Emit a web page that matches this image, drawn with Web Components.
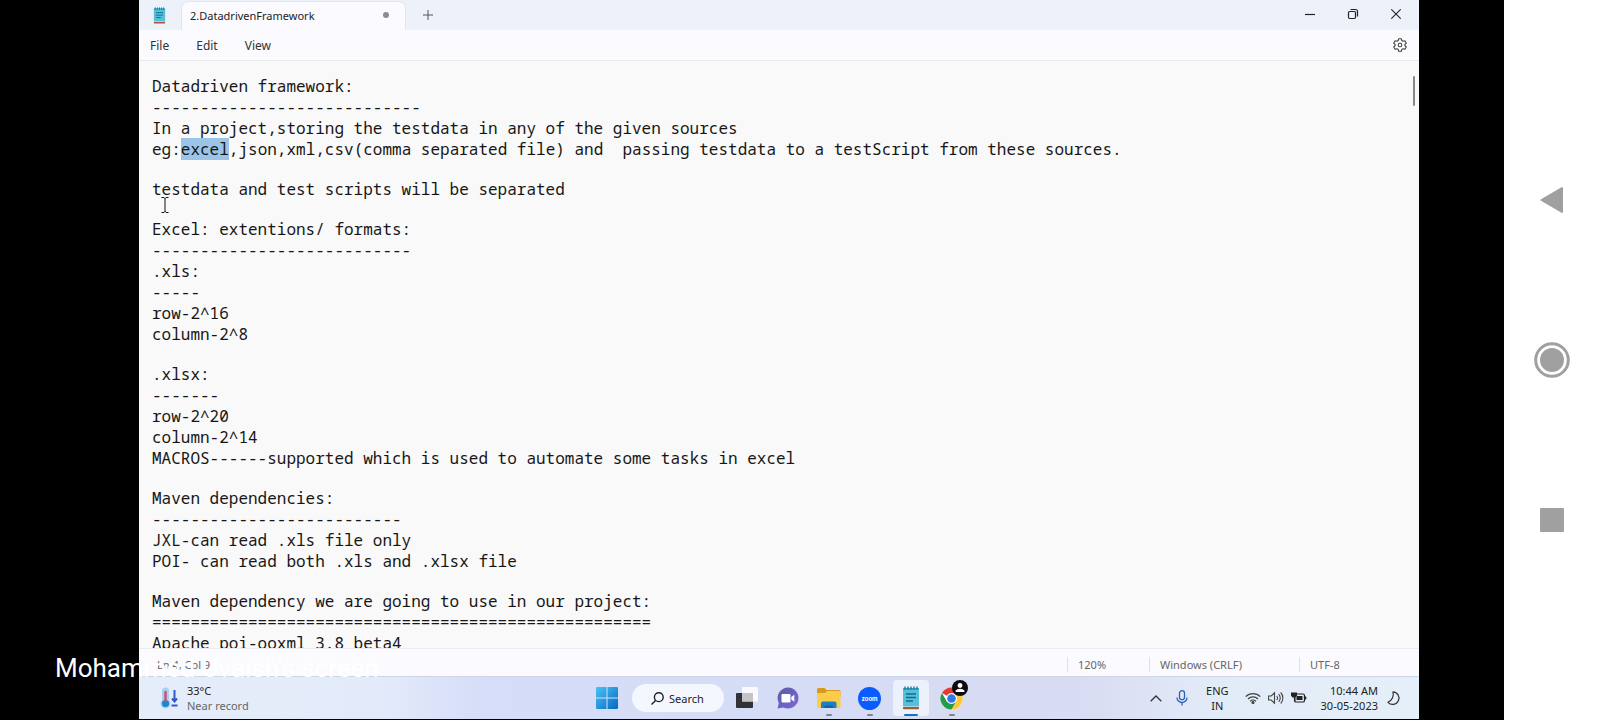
<!DOCTYPE html>
<html lang="en">
<head>
<meta charset="utf-8">
<title>2.DatadrivenFramework - Notepad</title>
<style>
html,body{margin:0;height:100%;background:#000;overflow:hidden}
body{font:12px/15px "Noto Sans","Open Sans",sans-serif;color:#222}
</style>
</head>
<body>
<screen-share presenter="Mohammed Uvaish's screen">
  <notepad-window>
    <title-bar slot="title" name="2.DatadrivenFramework"></title-bar>
    <menu-bar slot="menu"></menu-bar>
    <text-editor slot="body"></text-editor>
    <status-bar slot="status"></status-bar>
  </notepad-window>
  <task-bar slot="taskbar"></task-bar>
  <system-nav slot="nav"></system-nav>
</screen-share>
<script>
const base = `:host,*{box-sizing:border-box}button{border:0;background:none;padding:0;margin:0;font:inherit;color:inherit;display:grid;place-items:center}svg{display:block;overflow:visible}`;
const notepadIcon = (w,h) => `<svg width="${w}" height="${h}" viewBox="0 0 18 24" aria-hidden="true">
  <rect x="1" y="20" width="16" height="3.6" rx=".8" fill="#f1ece8"/><rect x="1" y="21" width="16" height="2.2" rx=".6" fill="#a85a35"/>
  <rect x="1" y="2" width="16" height="18.6" rx="1" fill="#56bfdc"/><path d="M1 3a1 1 0 0 1 1-1h14a1 1 0 0 1 1 1v1H1z" fill="#3aa4c8"/>
  <path d="M3 .6v3M6 .6v3M9 .6v3M12 .6v3M15 .6v3" stroke="#19708f" stroke-width="1.3"/>
  <path d="M4 8h10M4 11.5h10M4 15h7" stroke="#126d8d" stroke-width="1.3"/></svg>`;
const define = (name, css, html) => customElements.define(name, class extends HTMLElement {
  constructor(){
    super();
    const t = document.createElement('template');
    t.innerHTML = `<style>${base}${css}</style>${typeof html === 'function' ? html(this) : html}`;
    this.attachShadow({mode:'open'}).append(t.content.cloneNode(true));
  }
});

define('screen-share', `
:host{display:flex;height:100vh;background:#000;position:relative}
.stage{flex:1;min-width:0;display:flex;flex-direction:column;padding:0 85px 1px 139px}
.caption{position:absolute;left:55px;bottom:36px;font:26px/32px Roboto,sans-serif;color:#fff;white-space:nowrap}
`, el => `<main class="stage"><slot></slot><slot name="taskbar"></slot></main><slot name="nav"></slot><div class="caption">${el.getAttribute('presenter')}</div>`);

define('notepad-window', `
:host{display:flex;flex-direction:column;flex:1;min-height:0;background:#f9f9f9}
`, `<slot name="title"></slot><slot name="menu"></slot><slot name="body"></slot><slot name="status"></slot>`);

define('title-bar', `
:host{display:flex;height:30px;flex:none;background:#edf2fa;align-items:stretch}
.app{width:42px;padding:7px 0 0 14px}
.tab{width:225px;margin-top:1px;background:#fbfaff;border:1px solid #e3e6ee;border-bottom:0;border-radius:7px 7px 0 0;display:flex;align-items:center;justify-content:space-between;padding:0 16px 2px 8px;font-size:11px}
.dot{width:6px;height:6px;border-radius:50%;background:#8b8c90}
.add{width:44px}
.controls{margin-left:auto;display:flex;padding-right:2px}
.controls button{width:43px;height:27px}
`, el => `<div class="app">${notepadIcon(13,17)}</div>
<div class="tab" role="tab"><span>${el.getAttribute('name')}</span><span class="dot"></span></div>
<button class="add" aria-label="New tab"><svg width="10" height="10" viewBox="0 0 10 10"><path d="M5 0v10M0 5h10" stroke="#555"/></svg></button>
<div class="controls">
<button aria-label="Minimize"><svg width="10" height="10" viewBox="0 0 10 10"><path d="M0 5.5h10" stroke="#222" stroke-width="1.2"/></svg></button>
<button aria-label="Restore"><svg width="10" height="10" viewBox="0 0 10 10" fill="none" stroke="#222" stroke-width="1.2"><rect x=".5" y="2.5" width="7" height="7" rx="1.2"/><path d="M2.5.5h5a2 2 0 0 1 2 2v5"/></svg></button>
<button aria-label="Close"><svg width="10" height="10" viewBox="0 0 10 10"><path d="M.3.3l9.4 9.4M9.7.3L.3 9.7" stroke="#222" stroke-width="1.1"/></svg></button>
</div>`);

define('menu-bar', `
:host{display:flex;height:31px;flex:none;background:#fbfaff;border-bottom:1px solid #e9e9ee;align-items:center;padding:0 12px 0 11px;gap:27px;color:#333}
.gear{margin-left:auto}
`, `<button>File</button><button>Edit</button><button>View</button>
<button class="gear" aria-label="Settings"><svg width="14" height="14" viewBox="0 0 14 14" fill="none" stroke="#444" stroke-width="1.1" stroke-linejoin="round"><path d="M5.7.7h2.6l.5 1.8 1.3.7 1.8-.5 1.4 2.3-1.4 1.3v1.4l1.4 1.3-1.4 2.3-1.8-.5-1.3.7-.5 1.8H5.7l-.5-1.8-1.3-.7-1.8.5L.7 9l1.4-1.3V6.300L.7 5l1.400-2.300 1.800.5 1.300-.7z"/><circle cx="7" cy="7" r="1.800"/></svg></button>`);

const paragraphs = [
  ['Datadriven framework:','-'.repeat(28),'In a project,storing the testdata in any of the given sources','eg:<mark>excel</mark>,json,xml,csv(comma separated file) and  passing testdata to a testScript from these sources.'],
  ['testdata and test scripts will be separated'],
  ['Excel: extentions/ formats:','-'.repeat(27),'.xls:','-----','row-2^16','column-2^8'],
  ['.xlsx:','-------','row-2^20','column-2^14','MACROS------supported which is used to automate some tasks in excel'],
  ['Maven dependencies:','-'.repeat(26),'JXL-can read .xls file only','POI- can read both .xls and .xlsx file'],
  ['Maven dependency we are going to use in our project:','='.repeat(52),'Apache poi-ooxml 3.8 beta4']
];
define('text-editor', `
:host{display:block;flex:1;min-height:0;overflow:hidden;position:relative;background:#f9f9f9}
.doc{padding:15px 13px;display:flex;flex-direction:column;gap:19px;outline:0;font:16px/21px "Noto Sans Mono","Liberation Mono",monospace;color:#161616}
p{margin:0;white-space:pre}
mark{background:#9bc4e8;color:inherit}
.thumb{position:absolute;right:4px;top:15px;width:2px;height:30px;border-radius:1px;background:#888}
.cursor{position:absolute;left:22px;top:136px}
`, `<div class="doc" role="textbox" aria-multiline="true" aria-label="Document text" contenteditable="true" spellcheck="false">${paragraphs.map(p=>`<p>${p.join('\n')}</p>`).join('')}</div>
<div class="thumb"></div>
<svg class="cursor" width="8" height="16" viewBox="0 0 8 16" fill="none" stroke="#111"><path d="M.5.5H3L4 1.500 5 .5H7.500M4 1v14M.5 15.500H3L4 14.500 5 15.500H7.500"/></svg>`);

define('status-bar', `
:host{display:flex;height:28px;flex:none;background:#fbfaff;border-top:1px solid #ececf0;align-items:center;padding-top:3px;font-size:11px;color:#666}
span{border-left:1px solid #e0e0e6;padding-left:10px}
.pos{flex:1;border:0;padding-left:18px}
.zoom{width:82px}.eol{width:150px}.enc{width:120px}
`, `<span class="pos">Ln 4, Col 9</span><span class="zoom">120%</span><span class="eol">Windows (CRLF)</span><span class="enc">UTF-8</span>`);

define('task-bar', `
:host{display:grid;grid-template-columns:1fr auto 1fr;height:43px;flex:none;border-top:1px solid #cfd5e6;background:linear-gradient(90deg,#e5edf9 0,#e3eafa 19%,#d5ddf8 27%,#d6dcf5 55%,#d9dcf2 74%,#e2ebf8 84%,#e5eff9 100%);align-items:center;font-size:11px}
.weather{display:flex;align-items:center;gap:9px;padding-left:21px;text-align:left;justify-self:start}
small{font-size:11px;color:#666;display:block}
.apps{display:flex;gap:5px;align-items:center}
.apps button{width:36px;height:36px;position:relative;border-radius:4px}
.apps .search{width:92px;height:28px;margin-left:2px;border-radius:14px;background:#f4f7fe;display:flex;align-items:center;justify-content:center;gap:5px;font-size:11px}
.open::after{content:"";position:absolute;bottom:0;left:15px;width:6px;height:2px;border-radius:1px;background:#80838f}
.apps .active{background:#edf1fb}
.active::after{left:11px;width:14px;background:#1372bd}
.badge{position:absolute;right:2px;top:0}
.tray{display:flex;justify-self:end;align-items:center;padding-right:19px}
.mic{margin-left:14px}
.tray .mic{margin-left:14px}
.lang{margin:0 16px 0 18px;text-align:center}
.status{display:flex;gap:7px;align-items:center}
.clock{text-align:right;margin:0 9px 0 14px;white-space:nowrap}
`, `<button class="weather"><svg width="18" height="22" viewBox="0 0 18 22"><path d="M2 4a3.500 3.500 0 0 1 7 0v9a5 5 0 1 1-7 0z" fill="#a7d1f4"/><circle cx="5.500" cy="16.500" r="3.600" fill="#1d86d2"/><path d="M5.500 5v9" stroke="#cf4f66" stroke-width="2.400" stroke-linecap="round"/><path d="M14.500 3v11M12 11.500l2.500 3 2.500-3M11.500 18.500h6" stroke="#315bc4" stroke-width="2" fill="none"/></svg><span>33°C<small>Near record</small></span></button>
<nav class="apps">
<button aria-label="Start"><svg width="22" height="22" viewBox="0 0 22 22"><defs><linearGradient id="w" x2="1" y2="1"><stop stop-color="#48c4f7"/><stop offset="1" stop-color="#0668bd"/></linearGradient></defs><path d="M1 0h9.500v10.500H0V1a1 1 0 0 1 1-1zM11.500 0H21a1 1 0 0 1 1 1v9.500H11.500zM0 11.500h10.500V22H1a1 1 0 0 1-1-1zM11.500 11.500H22V21a1 1 0 0 1-1 1h-9.500z" fill="url(#w)"/></svg></button>
<button class="search"><svg width="13" height="13" viewBox="0 0 13 13" fill="none" stroke="#222" stroke-width="1.400"><circle cx="7.800" cy="5.200" r="4.400"/><path d="M4.600 8.400L.5 12.500"/></svg>Search</button>
<button aria-label="Task view"><svg width="22" height="22" viewBox="0 0 22 22"><rect x="0" y="6" width="17" height="15" rx="1" fill="#303236"/><rect x="6" y="0" width="16" height="14.500" rx="1" fill="#fff" opacity=".85"/><rect x="6" y="6" width="11" height="8.500" fill="#c3c4c8"/></svg></button>
<button aria-label="Chat"><svg width="22" height="22" viewBox="0 0 22 22"><defs><linearGradient id="c" x2="1" y2="1"><stop stop-color="#5b5aa8"/><stop offset="1" stop-color="#7e68d8"/></linearGradient></defs><path d="M11 .5A10.500 10.500 0 1 1 6.300 20.400L.6 21.500 1.800 16A10.500 10.500 0 0 1 11 .5z" fill="url(#c)"/><rect x="4.500" y="7" width="9" height="8.500" rx="1.300" fill="#fff"/><path d="M14.300 10l3-2.300v7l-3-2.300z" fill="#fff"/></svg></button>
<button class="open" aria-label="File Explorer"><svg width="24" height="22" viewBox="0 0 24 22"><path d="M0 2.500a1.500 1.500 0 0 1 1.500-1.500h6l2 2H22a1.500 1.500 0 0 1 1.500 1.500V10H0z" fill="#d79a1e"/><path d="M0 6h8l2-2h12a1.500 1.500 0 0 1 1.500 1.500v14A1.500 1.500 0 0 1 22 21H1.500A1.500 1.500 0 0 1 0 19.500z" fill="#fbcc47"/><path d="M4 21v-4.500a2 2 0 0 1 2-2h11.500a2 2 0 0 1 2 2V21z" fill="#1c7fc4"/><path d="M7.500 21v-1.500a1 1 0 0 1 1-1H15a1 1 0 0 1 1 1V21z" fill="#0f62a5"/></svg></button>
<button class="open" aria-label="Zoom"><svg width="23" height="23" viewBox="0 0 23 23"><circle cx="11.500" cy="11.500" r="11.500" fill="#0b5cff"/><text x="11.500" y="13.500" text-anchor="middle" font-family="Inter,sans-serif" font-size="6" font-weight="700" fill="#fff">zoom</text></svg></button>
<button class="open active" aria-label="Notepad">${notepadIcon(18,24)}</button>
<button class="open" aria-label="Chrome"><svg width="23" height="23" viewBox="0 0 24 24"><circle cx="12" cy="12" r="11.500" fill="#fff"/><path d="M12 12L2.040 6.250A11.500 11.500 0 0 1 21.960 6.250L12 6.300z" fill="#df3d34"/><path d="M21.960 6.250A11.500 11.500 0 0 1 12 23.500L17 15 12 6.250z" fill="#fcc934"/><path d="M2.040 6.250A11.500 11.500 0 0 0 12 23.500L16.900 14.900 7 14.900z" fill="#249a4b"/><circle cx="12" cy="12" r="5.700" fill="#fff"/><circle cx="12" cy="12" r="4.500" fill="#2f78e6"/></svg><svg class="badge" width="16" height="16" viewBox="0 0 16 16"><circle cx="8" cy="8" r="8" fill="#0b0b0b"/><circle cx="8" cy="5.500" r="2.400" fill="#fff"/><path d="M3.600 12V10.500Q5 8.800 8 8.800t4.400 1.700V12z" fill="#fff"/></svg></button>
</nav>
<div class="tray">
<button aria-label="Show hidden icons"><svg width="12" height="7" viewBox="0 0 12 7"><path d="M.7 6.300L6 1l5.300 5.300" fill="none" stroke="#333" stroke-width="1.300"/></svg></button>
<button class="mic" aria-label="Microphone"><svg width="12" height="16" viewBox="0 0 12 16" fill="none" stroke="#2d62b8" stroke-width="1.300"><rect x="3.500" y=".7" width="5" height="9" rx="2.500"/><path d="M1 7.500a5 5 0 0 0 10 0M6 12.500V15.500"/></svg></button>
<button class="lang"><span>ENG<br>IN</span></button>
<button class="status" aria-label="Network, volume, battery">
<svg width="16" height="12" viewBox="0 0 16 12" fill="none" stroke="#444" stroke-width="1.200"><path d="M.7 4.600a10.300 10.300 0 0 1 14.600 0M3 7a7 7 0 0 1 10 0M5.200 9.200a4 4 0 0 1 5.600 0"/><circle cx="8" cy="10.500" r="1" fill="#333"/></svg>
<svg width="16" height="12" viewBox="0 0 16 12" fill="none" stroke="#444" stroke-width="1.100"><path d="M.6 4h2.600L6.500.8v10.400L3.200 8H.6zM8.700 4a3 3 0 0 1 0 4M10.700 2.200a5.500 5.500 0 0 1 0 7.600M12.700.5a8 8 0 0 1 0 11"/></svg>
<svg width="16" height="12" viewBox="0 0 16 12"><rect x="3.500" y="2" width="10" height="8" rx="1.600" fill="none" stroke="#222" stroke-width="1.200"/><rect x="5.500" y="4" width="6" height="4" fill="#222"/><path d="M14.500 4.500v3" stroke="#222" stroke-width="1.500"/><path d="M0 .5h6v3.200L4.500 5.500V9h-1.500V5.500H1.500L0 3.700z" fill="#222"/></svg></button>
<button class="clock"><span>10:44 AM<br>30-05-2023</span></button>
<button aria-label="Focus assist"><svg width="13" height="14" viewBox="0 0 13 14"><path d="M6 .8A6.300 6.300 0 1 1 1 11.300 9 9 0 0 0 6 .8z" fill="none" stroke="#333" stroke-width="1.200" stroke-linejoin="round"/></svg></button>
</div>`);

define('system-nav', `
:host{display:flex;flex:none;width:96px;background:#fff;flex-direction:column;align-items:center;justify-content:center;gap:124px}
button{width:36px;height:36px}
`, `<button aria-label="Back"><svg width="24" height="28" viewBox="0 0 24 28"><path d="M1.500 14L22 2v24z" fill="#a0a0a0" stroke="#a0a0a0" stroke-width="2" stroke-linejoin="round"/></svg></button>
<button aria-label="Home"><svg width="36" height="36" viewBox="0 0 36 36"><circle cx="18" cy="18" r="16.300" fill="none" stroke="#a0a0a0" stroke-width="3"/><circle cx="18" cy="18" r="12" fill="#a0a0a0"/></svg></button>
<button aria-label="Recent apps"><svg width="24" height="24" viewBox="0 0 24 24"><rect width="24" height="24" rx="1" fill="#a0a0a0"/></svg></button>`);
</script>
</body>
</html>
